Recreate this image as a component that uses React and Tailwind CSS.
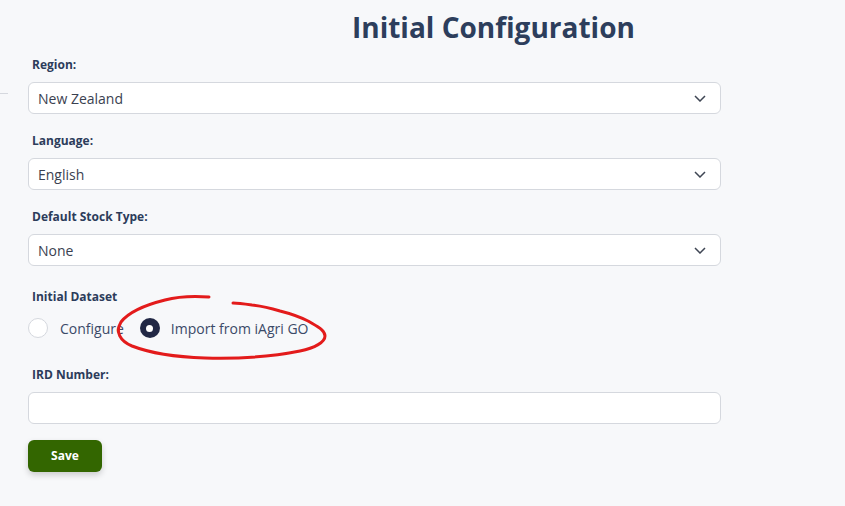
import { useState } from "react";

const font = { fontFamily: '"Open Sans", "Liberation Sans", sans-serif' };

function Chevron() {
    return (
        <svg width="12" height="7" viewBox="0 0 12 7" className="shrink-0">
            <path d="M1 1l5 5 5-5" fill="none" stroke="#3f4654" strokeWidth="1.5" />
        </svg>
    );
}

function SelectField({ label, value }) {
    return (
        <div className="flex flex-col">
            <label className="text-[12px] leading-[18px] font-bold text-[#2c3c5a] pl-1 mb-2">{label}</label>
            <div className="h-8 w-[693px] bg-white border border-[#d5d8de] rounded-md flex items-center justify-between pl-[9px] pr-[14px]">
                <span className="text-[14px] text-[#3a4150]">{value}</span>
                <Chevron />
            </div>
        </div>
    );
}

export default function App() {
    const [dataset, setDataset] = useState("import");

    return (
        <div className="relative w-full min-h-[506px] bg-[#f7f8fa]" style={font}>
            {/* left sidebar edge */}
            <div className="absolute left-0 top-[93px] w-2 h-px bg-[#d5d8de]" />

            <div className="flex flex-col px-7 pt-[7px]">
                <h1 className="text-[28px] leading-[40px] font-bold text-[#2d3e5c] ml-[324px]">
                    Initial Configuration
                </h1>

                <div className="mt-[9px]">
                    <SelectField label="Region:" value="New Zealand" />
                </div>
                <div className="mt-[18px]">
                    <SelectField label="Language:" value="English" />
                </div>
                <div className="mt-[18px]">
                    <SelectField label="Default Stock Type:" value="None" />
                </div>

                <div className="mt-[22px] flex flex-col">
                    <span className="text-[12px] leading-[18px] font-bold text-[#2c3c5a] pl-1">Initial Dataset</span>
                    <div className="flex items-center mt-3 h-5">
                        <button
                            onClick={() => setDataset("configure")}
                            className="flex items-center"
                        >
                            <span
                                className={
                                    dataset === "configure"
                                        ? "w-5 h-5 rounded-full bg-[#222845] flex items-center justify-center"
                                        : "w-5 h-5 rounded-full bg-white border border-[#d5d8de]"
                                }
                            >
                                {dataset === "configure" && <span className="w-[7px] h-[7px] rounded-full bg-white" />}
                            </span>
                            <span className="ml-3 text-[14px] text-[#3b4a68]">Configure</span>
                        </button>
                        <button
                            onClick={() => setDataset("import")}
                            className="flex items-center ml-4"
                        >
                            <span
                                className={
                                    dataset === "import"
                                        ? "w-5 h-5 rounded-full bg-[#222845] flex items-center justify-center"
                                        : "w-5 h-5 rounded-full bg-white border border-[#d5d8de]"
                                }
                            >
                                {dataset === "import" && <span className="w-[7px] h-[7px] rounded-full bg-white" />}
                            </span>
                            <span className="ml-[11px] text-[14px] text-[#3b4a68]">Import from iAgri GO</span>
                        </button>
                    </div>
                </div>

                <div className="mt-7 flex flex-col">
                    <label className="text-[12px] leading-[18px] font-bold text-[#2c3c5a] pl-1 mb-2">IRD Number:</label>
                    <input
                        type="text"
                        className="h-8 w-[693px] bg-white border border-[#d5d8de] rounded-md px-[9px] text-[14px] outline-none"
                    />
                </div>

                <div className="mt-4">
                    <button className="w-[74px] h-8 bg-[#336600] rounded-md text-white text-[12px] font-bold shadow-[0_3px_6px_rgba(0,0,0,0.18)]">
                        Save
                    </button>
                </div>
            </div>

            {/* hand-drawn annotation */}
            <svg className="absolute left-0 top-0 pointer-events-none" width="845" height="506">
                <path
                    d="M209 297 C195 296 180 296 165 300 C145 305 128 313 121 322 C115 332 120 341 132 346 C150 353 175 357 205 358 C240 359 275 356 300 351 C315 348 325 342 325 336 C325 330 318 327 308 321 C298 316 288 313 280 311 C270 308 262 306 252 305 C245 304 238 303 233 303"
                    fill="none"
                    stroke="#e31b1b"
                    strokeWidth="3"
                    strokeLinecap="round"
                />
            </svg>
        </div>
    );
}
